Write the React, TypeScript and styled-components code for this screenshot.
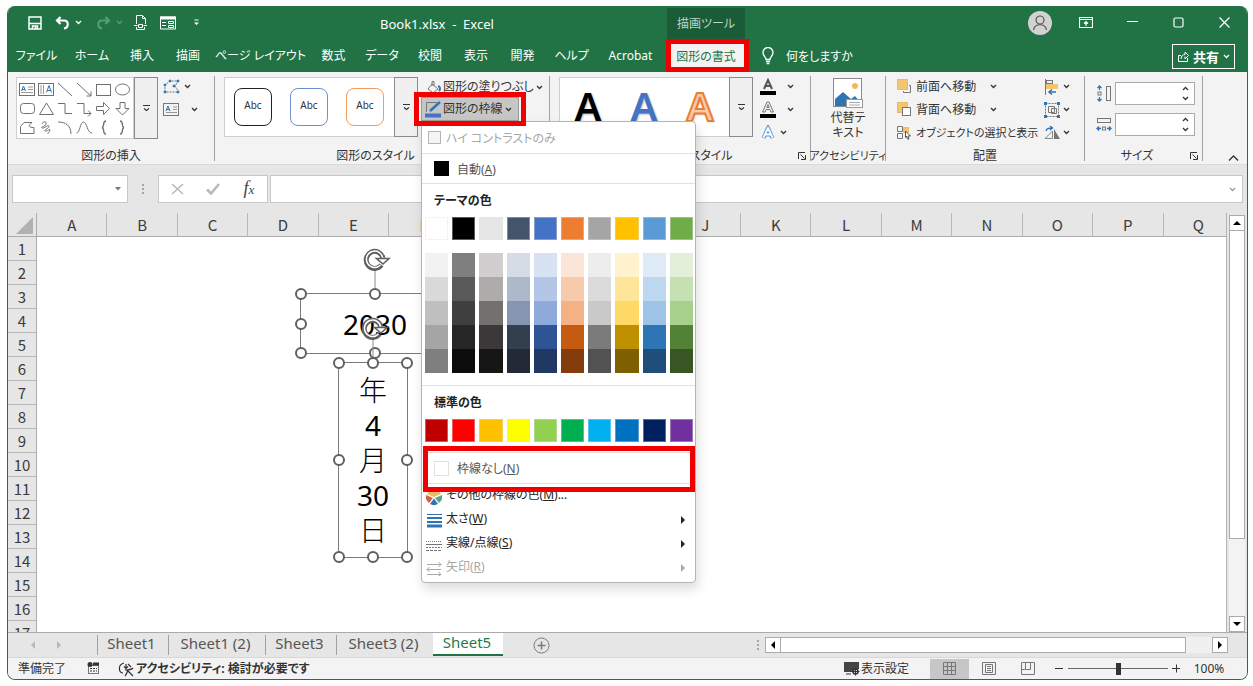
import React from "react";
import styled, { createGlobalStyle, css } from "styled-components";

const green = "#217346";
const red = "#f00000";
const ink = "#333333";
const blue = "#2f75b5";

const GlobalStyle = createGlobalStyle`
  *, *::before, *::after { box-sizing: border-box; }
  html, body { margin: 0; background: #fff; }
  body, button, input {
    font-family: "Noto Sans", "Noto Sans CJK JP", sans-serif;
    font-size: 12px;
    font-feature-settings: "palt";
    color: ${ink};
  }
  button { margin: 0; padding: 0; border: 0; background: none; white-space: nowrap; }
  input { margin: 0; }
  svg { display: block; flex: none; }
`;

/* ---------- window ---------- */

const Page = styled.div`
  height: 100vh;
  min-height: 480px;
  padding: 6px 5px 6px 7px;
`;

const Window = styled.div`
  height: 100%;
  display: flex;
  flex-direction: column;
  border: 1px solid ${green};
  border-top: 0;
  border-radius: 8px;
  overflow: hidden;
  background: #e6e6e6;
`;

const TitleBar = styled.header`
  display: flex;
  height: 33px;
  flex: none;
  background: ${green};
  color: #fff;
`;

const QuickAccess = styled.div`
  width: 372px;
  display: flex;
  align-items: center;
  gap: 9px;
  padding-left: 19px;
`;

const QuickButton = styled.button<{ $w: number; $dim?: boolean }>`
  width: ${(p) => p.$w}px;
  height: 24px;
  display: flex;
  align-items: center;
  justify-content: center;
  gap: 3px;
  color: ${(p) => (p.$dim ? "#5b9a78" : "#fff")};
`;

const Title = styled.h1`
  width: 287px;
  margin: 0;
  font-size: 13px;
  line-height: 37px;
  font-weight: 400;
  white-space: pre;
`;

const ContextLabel = styled.div`
  width: 78px;
  margin-top: 2px;
  background: #1b5c38;
  color: #b9d6c5;
  text-align: center;
  line-height: 31px;
`;

const Captions = styled.div`
  margin-left: auto;
  display: flex;
  align-items: center;
`;

const Caption = styled.button`
  width: 46px;
  height: 32px;
  display: flex;
  align-items: center;
  justify-content: center;
  color: #fff;
`;

const Avatar = styled.button`
  width: 24px;
  height: 24px;
  margin-right: 11px;
  border-radius: 50%;
  background: #d2d2d2;
  color: #555;
  display: flex;
  align-items: center;
  justify-content: center;
`;

const TabBar = styled.nav`
  display: flex;
  height: 33px;
  flex: none;
  background: ${green};
`;

const Tab = styled.button<{ $w: number }>`
  width: ${(p) => p.$w}px;
  color: #fff;
  line-height: 33px;
`;

const ActiveTab = styled.button`
  position: relative;
  width: 78px;
  margin-left: 3px;
  background: #f3f3f3;
  color: ${green};
`;

const Outline = styled.span<{ $inset: string }>`
  position: absolute;
  inset: ${(p) => p.$inset};
  border: 5px solid ${red};
  z-index: 20;
  pointer-events: none;
`;

const TellMe = styled.button`
  display: flex;
  align-items: center;
  gap: 12px;
  margin-left: 17px;
  color: #fff;
`;

const Share = styled.button`
  display: flex;
  align-items: center;
  gap: 4px;
  height: 25px;
  margin: 5px 12px 0 auto;
  padding: 0 4px;
  border: 1px solid #fff;
  color: #fff;
  font-size: 13px;
  font-weight: 700;
`;

/* ---------- ribbon ---------- */

const Ribbon = styled.section`
  display: flex;
  height: 93px;
  flex: none;
  background: #f3f3f3;
  border-bottom: 1px solid #dadada;
`;

const Group = styled.div<{ $w: number }>`
  width: ${(p) => p.$w}px;
  display: flex;
  flex-direction: column;
  padding-top: 3px;
`;

const Divider = styled.div`
  width: 1px;
  margin: 4px 0 3px;
  background: #a0a0a0;
`;

const GroupBody = styled.div<{ $pad: number }>`
  flex: 1;
  display: flex;
  align-items: flex-start;
  padding-left: ${(p) => p.$pad}px;
`;

const GroupFoot = styled.div`
  height: 16px;
  display: flex;
  align-items: center;
`;

const GroupName = styled.span<{ $compact?: boolean }>`
  flex: 1 0 0;
  min-width: 0;
  display: flex;
  justify-content: center;
  white-space: nowrap;
  font-size: ${(p) => (p.$compact ? 11 : 12)}px;
  line-height: 16px;
`;

const Launcher = styled.button`
  width: 12px;
  height: 12px;
  margin-right: 1px;
`;

const ShapeGallery = styled.div`
  width: 118px;
  height: 62px;
  margin-top: 2px;
  display: grid;
  grid-template-columns: repeat(6, 19px);
  grid-auto-rows: 19px;
  padding: 2px 1px;
  border: 1px solid #cfcfcf;
  background: #fff;
`;

const CardGallery = styled.div`
  width: 170px;
  height: 60px;
  margin-top: 2px;
  display: flex;
  align-items: center;
  padding-left: 9px;
  gap: 18px;
  border: 1px solid #cfcfcf;
  border-right: 0;
  background: #fff;
`;

const MoreButton = styled.button<{ $h: number }>`
  width: 24px;
  height: ${(p) => p.$h}px;
  margin-top: 2px;
  border: 1px solid #8a8a8a;
  background: #f0f0f0;
  display: flex;
  align-items: center;
  justify-content: center;
`;

const StyleCard = styled.button<{ $c: string }>`
  width: 38px;
  height: 38px;
  border: 1px solid ${(p) => p.$c};
  border-radius: 8px;
  background: #fff;
  font-size: 10px;
  line-height: 32px;
  padding-bottom: 4px;
`;

const Letter = styled.button<{ $c: string; $edge?: string }>`
  width: 38px;
  height: 58px;
  font-family: "Noto Sans", sans-serif;
  font-size: 40px;
  line-height: 56px;
  font-weight: 600;
  padding-bottom: 2px;
  color: ${(p) => p.$c};
  text-shadow: 1px 1px 2px #bbb;
  ${(p) => p.$edge && css`-webkit-text-stroke: 2px ${p.$edge};`}
`;

const Stack = styled.div<{ $ml: number; $mt?: number }>`
  display: flex;
  flex-direction: column;
  margin-left: ${(p) => p.$ml}px;
  margin-top: ${(p) => p.$mt ?? 0}px;
`;

const Command = styled.button<{ $gap?: number }>`
  height: 23px;
  display: flex;
  align-items: center;
  gap: ${(p) => p.$gap ?? 4}px;
`;

const CommandText = styled.span<{ $w?: number; $compact?: boolean }>`
  ${(p) => p.$w && css`width: ${p.$w}px;`}
  text-align: left;
  font-size: ${(p) => (p.$compact ? 11 : 12)}px;
  line-height: 16px;
`;

const FillButton = styled(Command)`
  height: 20px;
  padding-left: 5px;
  gap: 2px;
`;

const OutlineAnchor = styled.div`
  position: relative;
`;

const OutlineButton = styled(Command)`
  position: relative;
  height: 24px;
  width: 98px;
  padding-left: 3px;
  gap: 2px;
  background: #c6c6c6;
  border: 1px solid #9a9a9a;
`;

const AltText = styled.button`
  width: 100%;
  margin-top: 2px;
  display: flex;
  flex-direction: column;
  align-items: center;
  gap: 2px;
  line-height: 15px;
`;

const SizeRow = styled.label`
  display: flex;
  align-items: center;
  gap: 3px;
  margin: 5px 0 3px;
`;

const Spin = styled.span`
  width: 80px;
  height: 23px;
  display: flex;
  border: 1px solid #ababab;
  background: #fff;
`;

const SpinInput = styled.input`
  flex: 1;
  min-width: 0;
  border: 0;
  background: none;
`;

const SpinButtons = styled.span`
  width: 18px;
  display: flex;
  flex-direction: column;
  justify-content: space-around;
  align-items: center;
`;

const Collapse = styled.button`
  margin: auto 8px 2px auto;
`;

/* ---------- menu ---------- */

const Menu = styled.div`
  position: absolute;
  top: 24px;
  left: 0;
  z-index: 10;
  width: 275px;
  height: 462px;
  border: 1px solid #b5b5b5;
  border-radius: 4px;
  background: #fff;
  box-shadow: 2px 6px 12px rgba(0, 0, 0, 0.14);
`;

const MenuCheck = styled.label`
  height: 32px;
  display: flex;
  align-items: center;
  gap: 5px;
  padding-left: 6px;
  border-bottom: 1px solid #e1e1e1;
  color: #a8a8a8;
`;

const CheckBox = styled.input`
  appearance: none;
  width: 13px;
  height: 13px;
  border: 1px solid #b5b5b5;
  background: #f5f5f5;
`;

const MenuSwatchItem = styled.button`
  position: relative;
  width: 100%;
  height: 30px;
  display: flex;
  align-items: center;
  gap: 8px;
  padding-left: 12px;
  border-bottom: 1px solid #e1e1e1;
  color: #555;
`;

const NoLineItem = styled(MenuSwatchItem)`
  border-top: 1px solid #e1e1e1;
  height: 32px;
`;

const SmallSwatch = styled.span<{ $c: string; $edge: string }>`
  width: 15px;
  height: 15px;
  background: ${(p) => p.$c};
  border: 1px solid ${(p) => p.$edge};
`;

const MenuHeading = styled.h2`
  margin: 0;
  padding-left: 12px;
  font-size: 12px;
  line-height: 33px;
  font-weight: 700;
  color: #222;
`;

const Swatches = styled.div<{ $after: number }>`
  display: grid;
  grid-template-columns: repeat(10, 1fr);
  column-gap: 4px;
  padding: 0 2px 0 3px;
  margin-bottom: ${(p) => p.$after}px;
`;

const Swatch = styled.button<{ $c: string; $h: number }>`
  height: ${(p) => p.$h}px;
  background: ${(p) => p.$c};
  box-shadow: inset 0 0 0 1px rgba(225, 225, 225, 0.4);
`;

const Shade = styled.button<{ $c: string }>`
  height: 24px;
  background: ${(p) => p.$c};
`;

const Separator = styled.div`
  height: 1px;
  background: #e1e1e1;
`;

const NoLineFrame = styled(Outline)`
  z-index: 12;
`;

const MenuItem = styled.button<{ $dim?: boolean }>`
  width: 100%;
  height: 24px;
  display: flex;
  align-items: center;
  gap: 4px;
  padding: 0 8px 0 4px;
  color: ${(p) => (p.$dim ? "#a8a8a8" : "#222")};
`;

const MenuText = styled.span`
  flex: 1;
  padding-bottom: 5px;
  text-align: left;
`;

/* ---------- formula bar ---------- */

const FormulaBar = styled.section`
  display: flex;
  flex: none;
  height: 48px;
  padding: 10px 4px;
`;

const Field = styled.span<{ $w?: number }>`
  ${(p) => (p.$w ? css`width: ${p.$w}px;` : css`flex: 1;`)}
  height: 28px;
  display: flex;
  align-items: center;
  padding-right: 6px;
  border: 1px solid #c8c8c8;
  background: #fff;
  color: #999;
`;

const FieldInput = styled.input`
  flex: 1;
  min-width: 0;
  border: 0;
  background: none;
`;

const Grip = styled.span<{ $w: number }>`
  width: ${(p) => p.$w}px;
  display: flex;
  justify-content: center;
  align-items: center;
  color: #a5a5a5;
`;

const FormulaButtons = styled.div`
  width: 110px;
  height: 28px;
  margin-right: 2px;
  display: flex;
  border: 1px solid #c8c8c8;
  background: #fff;
`;

const FormulaButton = styled.button`
  flex: 1;
  display: flex;
  align-items: center;
  justify-content: center;
  color: #b8b8b8;
`;

const Fx = styled.i`
  font-family: "Liberation Serif", serif;
  font-size: 18px;
  line-height: 18px;
  color: #444;
`;

const FxSub = styled.span`
  font-size: 13px;
`;

/* ---------- sheet ---------- */

const SheetArea = styled.main`
  flex: 1;
  min-height: 0;
  display: flex;
`;

const Viewport = styled.div`
  position: relative;
  flex: 1;
  min-width: 0;
  overflow: hidden;
  background: #fff;
  border-right: 1px solid #b5b5b5;
`;

const Grid = styled.table`
  width: calc(100% + 8px);
  table-layout: fixed;
  border-spacing: 0;
  font-family: "Noto Sans CJK JP", sans-serif;
  font-size: 15px;
  line-height: 22px;
  th { padding: 0; font-weight: 400; background: #e6e6e6; color: #3b3b3b; }
  td { padding: 0; }
`;

const Corner = styled.th`
  width: 29px;
  height: 24px;
  border-right: 1px solid #ababab;
  border-bottom: 1px solid #ababab;
`;

const ColumnHead = styled.th`
  height: 24px;
  border-right: 1px solid #b8b8b8;
  border-bottom: 1px solid #ababab;
`;

const RowHead = styled.th`
  height: 24px;
  border-right: 1px solid #ababab;
  border-bottom: 1px solid #b8b8b8;
`;

const Shape = styled.div<{ $x: number; $y: number; $w: number; $h: number }>`
  position: absolute;
  left: ${(p) => p.$x}px;
  top: ${(p) => p.$y}px;
  width: ${(p) => p.$w}px;
  height: ${(p) => p.$h}px;
  border: 1px solid #7a7a7a;
  font-size: 28px;
  line-height: 60px;
  text-align: center;
  color: #000;
`;

const VerticalText = styled.div`
  padding-top: 10px;
  display: flex;
  flex-direction: column;
  align-items: center;
  line-height: 35px;
`;

const Kanji = styled.span`
  font-weight: 300;
`;

const Handle = styled.span<{ $l: number; $t: number }>`
  position: absolute;
  left: calc(${(p) => p.$l}% - 6px);
  top: calc(${(p) => p.$t}% - 6px);
  width: 12px;
  height: 12px;
  border: 2px solid #5f5f5f;
  border-radius: 50%;
  background: #fff;
`;

const Rotator = styled.span`
  position: absolute;
  left: calc(50% - 12px);
  top: -46px;
`;

const VScroll = styled.div`
  width: 20px;
  display: flex;
  flex-direction: column;
  align-items: center;
  padding-top: 2px;
  padding-right: 1px;
`;

const ScrollButton = styled.button`
  width: 16px;
  height: 16px;
  flex: none;
  border: 1px solid #ababab;
  background: #fff;
  color: #000;
  display: flex;
  align-items: center;
  justify-content: center;
`;

const VTrack = styled.div`
  flex: 1;
  width: 16px;
  background: #f3f3f3;
`;

const VThumb = styled.div`
  height: 80%;
  border: 1px solid #ababab;
  border-top: 0;
  background: #fff;
`;

/* ---------- sheet tabs and status ---------- */

const SheetBar = styled.nav`
  flex: none;
  height: 26px;
  display: flex;
  border-top: 1px solid #ababab;
  border-bottom: 1px solid #d8d8d8;
`;

const SheetArrows = styled.div`
  width: 89px;
  display: flex;
  align-items: center;
  gap: 18px;
  padding-left: 21px;
  color: #b8b8b8;
`;

const SheetTab = styled.button<{ $w: number }>`
  width: ${(p) => p.$w}px;
  height: 20px;
  margin-top: 2px;
  padding: 0 3px 3px 0;
  border-left: 1px solid #a0a0a0;
  font-size: 15px;
  line-height: 17px;
  color: #555;
`;

const CurrentSheet = styled.button`
  width: 70px;
  height: 23px;
  border-bottom: 2px solid ${green};
  padding: 0 2px 2px 0;
  background: #fff;
  font-size: 15px;
  line-height: 19px;
  color: #1f7d49;
`;

const AddSheet = styled.button`
  margin-left: 30px;
  color: #7a7a7a;
`;

const HScroll = styled.div`
  width: 40%;
  margin-left: auto;
  padding-right: 19px;
  display: flex;
  align-items: center;
`;

const HTrack = styled.div`
  flex: 1;
  height: 16px;
  background: #f0f0f0;
`;

const HThumb = styled.div`
  width: 94%;
  height: 16px;
  border: 1px solid #ababab;
  border-left: 0;
  background: #fff;
`;

const StatusBar = styled.footer`
  flex: none;
  height: 21px;
  display: flex;
  align-items: center;
  padding: 0 20px 0 10px;
  background: #f3f3f3;
  line-height: 20px;
`;

const StatusButton = styled.button<{ $ml: number; $bold?: boolean }>`
  display: flex;
  align-items: center;
  gap: 1px;
  margin-left: ${(p) => p.$ml}px;
  line-height: 20px;
  font-weight: ${(p) => (p.$bold ? 700 : 400)};
`;

const Spacer = styled.span`
  flex: 1;
`;

const Views = styled.div`
  display: flex;
  margin: 0 8px 0 21px;
`;

const ViewButton = styled.button<{ $on?: boolean }>`
  width: 39px;
  height: 20px;
  display: flex;
  align-items: center;
  justify-content: center;
  background: ${(p) => (p.$on ? "#c6c6c6" : "transparent")};
`;

const Zoom = styled.input`
  appearance: none;
  width: 100px;
  height: 16px;
  margin: 0 4px;
  background: linear-gradient(#666, #666) center / 100% 1px no-repeat;
  &::-webkit-slider-thumb {
    appearance: none;
    width: 5px;
    height: 12px;
    background: #333;
  }
`;

const ZoomStep = styled.button`
  width: 9px;
`;

const ZoomValue = styled.button`
  width: 36px;
  margin-left: 10px;
`;

/* ---------- icons ---------- */

type IconProps = { w: number; h: number; children: React.ReactNode; sw?: number };
const Icon = ({ w, h, children, sw = 1 }: IconProps) => (
  <svg width={w} height={h} viewBox={`0 0 ${w} ${h}`} fill="none" stroke="currentColor" strokeWidth={sw} aria-hidden="true">
    {children}
  </svg>
);

const Chevron = () => (
  <Icon w={7} h={5} sw={1.3}><path d="M1 1l2.500 2.500L6 1" /></Icon>
);
const ChevronUp = () => (
  <Icon w={7} h={5} sw={1.3}><path d="M1 4l2.500-2.500L6 4" /></Icon>
);
const MoreIcon = () => (
  <Icon w={9} h={8} sw={1.1}><path d="M1 1.500h7M2 4.500l2.500 2L7 4.500" /></Icon>
);
const LaunchIcon = () => (
  <Icon w={10} h={10}><path d="M1.500 8V1.500H8M3.500 3.500l4 4M8.500 4v4.500H4" /></Icon>
);
const Arrow = ({ d }: { d: "left" | "right" | "up" | "down" }) => {
  const path = { left: "M6 0v8L2 4z", right: "M2 0v8l4-4z", up: "M0 6h8L4 2z", down: "M0 2h8L4 6z" }[d];
  return <Icon w={8} h={8} sw={0}><path d={path} fill="currentColor" /></Icon>;
};

const shapeIcons: React.ReactNode[] = [
  <><rect x="1.500" y="3.500" width="15" height="12" /><path d="M10 7h5M10 9.500h5M3 12.500h12" stroke="#999" /><path d="M3.500 11l2-5 2 5M4.200 9.500h2.600" stroke={blue} /></>,
  <><rect x="1.500" y="3.500" width="15" height="12" /><path d="M4 5v9M6.500 5v9" stroke="#999" /><path d="M9.500 12.500l2.500-7 2.500 7M10.300 10.500h3.500" stroke={blue} /></>,
  <path d="M2 3l14 13" />,
  <path d="M2 3l14 13M16 11.500V16h-4.500" />,
  <rect x="2.500" y="4.500" width="14" height="11" />,
  <ellipse cx="9.500" cy="9.500" rx="7" ry="5.500" />,
  <rect x="2.500" y="4.500" width="14" height="10" rx="3" />,
  <path d="M9.500 4l7 11.500h-14z" />,
  <path d="M2 4.500h7v10h7" />,
  <path d="M2 4.500h7v10h7M13 11.500l3 3-3 3" />,
  <path d="M2.500 7.500h7v-4l6 6-6 6v-4h-7z" />,
  <path d="M7 3.500h5v6h4l-6.500 6.500-6.500-6.500h4z" />,
  <path d="M6 4.500h8c-4 3-4 5 2 5v6H2.500v-7z" />,
  <path d="M5 6c1-3 5-3 4 0s-6 3-4 4 6-4 7-2-6 4-4 5 5-3 5-1-3 3-2 4" />,
  <path d="M2 4c8 0 13 4 13 12" />,
  <path d="M1.500 15C5 15 5 4 8.500 4S12 15 17 15" />,
  <path d="M12 3c-4 0-1 6-4 6.500C11 10 8 16 12 16" strokeWidth="1.300" />,
  <path d="M7 3c4 0 1 6 4 6.500C8 10 11 16 7 16" strokeWidth="1.300" />,
];

const FontColor = ({ hollow }: { hollow?: boolean }) => (
  <Icon w={16} h={17}>
    {hollow ? (
      <path d="M2.500 11L7 1h2l4.500 10h-2.500l-1-2.500H6L5 11zM6.800 6.500h2.400L8 3.500z" stroke="#777" />
    ) : (
      <path d="M4 11L8 2l4 9M5.500 8h5" stroke="#555" strokeWidth="2" />
    )}
    <path d="M0 15h16" stroke="#000" strokeWidth="4" />
  </Icon>
);

const LayerIcon = ({ back }: { back?: boolean }) => (
  <Icon w={15} h={15}>
    {back ? (
      <><rect x="0.500" y="0.500" width="10" height="10" fill="#f2c572" stroke="#e8bb66" /><rect x="5.500" y="5.500" width="8" height="8" fill="#fff" stroke="#777" /></>
    ) : (
      <><path d="M12 6.500h1.500v7h-7V12" stroke="#777" /><rect x="0.500" y="0.500" width="10" height="10" fill="#f2c572" stroke="#e8bb66" /></>
    )}
  </Icon>
);

const RotateHandle = () => (
  <svg width="28" height="40" viewBox="0 0 28 40" fill="none" aria-hidden="true">
    <path d="M12 22v18" stroke="#8a8a8a" />
    <path d="M18.500 17A8.500 8.500 0 1 1 20 10" stroke="#5f5f5f" strokeWidth="5" />
    <path d="M17.500 17A8.200 8.200 0 1 1 19.800 10.500" stroke="#fff" strokeWidth="1.500" />
    <path d="M13.500 10.500H26l-6 5.500z" fill="#fff" stroke="#5f5f5f" strokeWidth="1.600" />
  </svg>
);

/* ---------- data ---------- */

const tabs: [string, number][] = [
  ["ファイル", 57], ["ホーム", 54], ["挿入", 46], ["描画", 46], ["ページ レイアウト", 99], ["数式", 47],
  ["データ", 50], ["校閲", 46], ["表示", 46], ["開発", 47], ["ヘルプ", 51], ["Acrobat", 67],
];

const themeColors = ["#ffffff", "#000000", "#e7e6e6", "#44546a", "#4472c4", "#ed7d31", "#a5a5a5", "#ffc000", "#5b9bd5", "#70ad47"];
const shades = [
  ["#f2f2f2", "#7f7f7f", "#d0cece", "#d6dce5", "#d9e2f3", "#fbe5d6", "#ededed", "#fff2cc", "#deebf7", "#e2f0d9"],
  ["#d9d9d9", "#595959", "#aeabab", "#adb9ca", "#b4c6e7", "#f7caac", "#dbdbdb", "#fee599", "#bdd7ee", "#c5e0b3"],
  ["#bfbfbf", "#3f3f3f", "#757070", "#8496b0", "#8eaadb", "#f4b183", "#c9c9c9", "#ffd965", "#9dc3e6", "#a8d08d"],
  ["#a5a5a5", "#262626", "#3a3838", "#323f4f", "#2f5496", "#c55a11", "#7b7b7b", "#bf9000", "#2e75b5", "#538135"],
  ["#7f7f7f", "#0c0c0c", "#171616", "#222a35", "#1f3864", "#833c0b", "#525252", "#7f6000", "#1e4e79", "#375623"],
];
const standardColors = ["#c00000", "#ff0000", "#ffc000", "#ffff00", "#92d050", "#00b050", "#00b0f0", "#0070c0", "#002060", "#7030a0"];
const columns = "ABCDEFGHIJKLMNOPQ".split("");
const rows = Array.from({ length: 17 }, (_, i) => i + 1);

/* ---------- parts ---------- */

const OutlineMenu = () => (
  <Menu role="menu">
    <MenuCheck><CheckBox type="checkbox" disabled />ハイ コントラストのみ</MenuCheck>
    <MenuSwatchItem><SmallSwatch $c="#000" $edge="#000" /><span>自動(<u>A</u>)</span></MenuSwatchItem>
    <MenuHeading>テーマの色</MenuHeading>
    <Swatches $after={13}>
      {themeColors.map((c) => <Swatch key={c} $c={c} $h={23} aria-label={c} />)}
    </Swatches>
    <Swatches $after={12}>
      {shades.flat().map((c, i) => <Shade key={i} $c={c} aria-label={c} />)}
    </Swatches>
    <Separator />
    <MenuHeading>標準の色</MenuHeading>
    <Swatches $after={10}>
      {standardColors.map((c) => <Swatch key={c} $c={c} $h={23} aria-label={c} />)}
    </Swatches>
    <NoLineItem>
      <SmallSwatch $c="#fff" $edge="#e1e1e1" /><span>枠線なし(<u>N</u>)</span>
      <NoLineFrame $inset="-7px 0 -9px 1px" />
    </NoLineItem>
    <MenuItem>
      <Icon w={16} h={24} sw={0}>
        <path d="M7 14L0 11a8 8 0 0 0 3 8z" fill="#d9603b" />
        <path d="M8 14.500L4 20a8 8 0 0 0 8 0z" fill={blue} />
        <path d="M9 14l7-3a8 8 0 0 1-3 8z" fill="#5aa583" />
        <path d="M8 13L1 10a8 8 0 0 1 14 0z" fill="#e8bb66" />
      </Icon>
      <MenuText>その他の枠線の色(<u>M</u>)...</MenuText>
    </MenuItem>
    <MenuItem>
      <Icon w={16} h={16}><path d="M1 2.500h15" stroke={blue} /><path d="M1 6h15" stroke={blue} strokeWidth="2" /><path d="M1 10h15" stroke={blue} strokeWidth="2" /><path d="M1 14h15" stroke={blue} strokeWidth="3" /></Icon>
      <MenuText>太さ(<u>W</u>)</MenuText><Arrow d="right" />
    </MenuItem>
    <MenuItem>
      <Icon w={16} h={16}><g stroke="#777"><path d="M0 5.500h16" strokeDasharray="1 1" /><path d="M0 8.500h16" /><path d="M0 11.500h16" strokeDasharray="2 1" /><path d="M0 14.500h16" strokeDasharray="3 1" /></g></Icon>
      <MenuText>実線/点線(<u>S</u>)</MenuText><Arrow d="right" />
    </MenuItem>
    <MenuItem $dim disabled>
      <Icon w={16} h={16}><path d="M1 4.500h14M12.500 2l2.500 2.500L12.500 7M1 9.500h14M3.500 7L1 9.500 3.500 12M1 14.500h14M12.500 12l2.500 2.500-2.500 1.500" /></Icon>
      <MenuText>矢印(<u>R</u>)</MenuText><Arrow d="right" />
    </MenuItem>
  </Menu>
);

const eight: [number, number][] = [[0, 0], [50, 0], [100, 0], [0, 50], [100, 50], [0, 100], [50, 100], [100, 100]];
const Handles = () => (
  <>
    {eight.map(([l, t]) => <Handle key={`${l}-${t}`} $l={l} $t={t} />)}
  </>
);

const RibbonGroups = () => (
  <Ribbon>
    <Group $w={206}>
      <GroupBody $pad={8}>
        <ShapeGallery>
          {shapeIcons.map((s, i) => (
            <button key={i} aria-label="図形"><Icon w={19} h={19}><g stroke="#707070">{s}</g></Icon></button>
          ))}
        </ShapeGallery>
        <MoreButton $h={62} aria-label="その他"><MoreIcon /></MoreButton>
        <Stack $ml={5}>
          <Command $gap={4} aria-label="図形の編集">
            <Icon w={17} h={15}><path d="M2 13V6l5-4h8l-3 5 4 6z" stroke="#777" strokeDasharray="2 1" /><path d="M1 12h2v2H1zM6 1h2v2H6zM14 1h2v2h-2zM14 12h2v2h-2zM10 6h2v2h-2zM1 5h2v2H1z" fill={blue} stroke={blue} strokeWidth="0.500" /></Icon>
            <Chevron />
          </Command>
          <Command $gap={11} aria-label="テキスト ボックス">
            <Icon w={17} h={14}><rect x="0.500" y="0.500" width="15" height="12" stroke="#777" /><path d="M10 4h4M10 6.500h4M3 9.500h11" stroke="#999" /><path d="M3 8l2-5 2 5M3.800 6.500h2.500" stroke={blue} /></Icon>
            <Chevron />
          </Command>
        </Stack>
      </GroupBody>
      <GroupFoot><GroupName>図形の挿入</GroupName></GroupFoot>
    </Group>
    <Divider />
    <Group $w={334}>
      <GroupBody $pad={9}>
        <CardGallery>
          <StyleCard $c="#222">Abc</StyleCard>
          <StyleCard $c="#6f8fd2">Abc</StyleCard>
          <StyleCard $c="#f09a5e">Abc</StyleCard>
        </CardGallery>
        <MoreButton $h={60} aria-label="その他"><MoreIcon /></MoreButton>
        <Stack $ml={3} $mt={2}>
          <FillButton>
            <Icon w={15} h={15}><path d="M6 4l6 5-5 4-5-4zM6 6V1.500h2V6" stroke="#777" /><path d="M12 6c3 1 2 4 1 5" stroke={blue} strokeWidth="2" /></Icon>
            <CommandText>図形の塗りつぶし</CommandText><Chevron />
          </FillButton>
          <OutlineAnchor>
            <OutlineButton aria-haspopup="menu">
              <Icon w={16} h={17}><path d="M12 1.500H1.500V11" stroke="#777" /><path d="M5 10L15 1" stroke={blue} strokeWidth="2.500" /><path d="M0 14.500h16" stroke="#4472c4" strokeWidth="4" /></Icon>
              <CommandText>図形の枠線</CommandText><Chevron />
              <Outline $inset="-6px -8px" />
            </OutlineButton>
            <OutlineMenu />
          </OutlineAnchor>
        </Stack>
      </GroupBody>
      <GroupFoot><GroupName>図形のスタイル</GroupName><Launcher aria-label="図形のスタイルの設定"><LaunchIcon /></Launcher></GroupFoot>
    </Group>
    <Divider />
    <Group $w={260}>
      <GroupBody $pad={9}>
        <CardGallery>
          <Letter $c="#000">A</Letter>
          <Letter $c="#4472c4">A</Letter>
          <Letter $c="#f8cbad" $edge="#ed7d31">A</Letter>
        </CardGallery>
        <MoreButton $h={60} aria-label="その他"><MoreIcon /></MoreButton>
        <Stack $ml={7}>
          <Command $gap={11} aria-label="文字の塗りつぶし"><FontColor /><Chevron /></Command>
          <Command $gap={11} aria-label="文字の輪郭"><FontColor hollow /><Chevron /></Command>
          <Command $gap={4} aria-label="文字の効果">
            <Icon w={16} h={16}><path d="M3.500 13L8 3l4.500 10M5 9.500h6" stroke="#5b9bd5" strokeWidth="4" /><path d="M3.500 12.500L8 3l4.500 9.500M5 9.500h6" stroke="#fff" strokeWidth="1.800" /></Icon>
            <Chevron />
          </Command>
        </Stack>
      </GroupBody>
      <GroupFoot><GroupName>ワードアートのスタイル</GroupName><Launcher aria-label="ワードアートの設定"><LaunchIcon /></Launcher></GroupFoot>
    </Group>
    <Divider />
    <Group $w={74}>
      <GroupBody $pad={0}>
        <AltText>
          <Icon w={30} h={31}>
            <rect x="0.500" y="1.500" width="28" height="28" fill="#fff" stroke="#8a8a8a" />
            <circle cx="22" cy="9" r="3" fill="#f0b95b" stroke="none" />
            <path d="M2 29v-7l8-7 8 7 4-3 5 6v4z" fill={blue} stroke="none" />
            <rect x="13.500" y="22.500" width="16" height="8" fill="#fff" stroke="#999" /><path d="M16 25.500h11M16 28h11" stroke="#aaa" />
          </Icon>
          <span>代替テ<br />キスト</span>
        </AltText>
      </GroupBody>
      <GroupFoot><GroupName $compact>アクセシビリティ</GroupName></GroupFoot>
    </Group>
    <Divider />
    <Group $w={198}>
      <GroupBody $pad={11}>
        <Stack $ml={0}>
          <Command><LayerIcon /><CommandText $w={70}>前面へ移動</CommandText><Chevron /></Command>
          <Command><LayerIcon back /><CommandText $w={70}>背面へ移動</CommandText><Chevron /></Command>
          <Command>
            <Icon w={15} h={15}><path d="M0.500 1.500h5v5h-5zM0.500 8.500h5v5h-5z" stroke="#777" /><path d="M6.500 2.500h5v5h-5z" fill="#f2c572" stroke="#e8bb66" /><path d="M8.500 6l5 5H11l1 3h-1.500l-1-3-1 1.500z" fill="#fff" stroke="#555" /></Icon>
            <CommandText $w={118} $compact>オブジェクトの選択と表示</CommandText>
          </Command>
        </Stack>
        <Stack $ml={10}>
          <Command $gap={3} aria-label="配置">
            <Icon w={16} h={16}><path d="M1.500 0v16" stroke="#777" /><rect x="2.500" y="1.500" width="6" height="3" stroke="#777" /><rect x="2" y="5" width="12" height="5" fill="#f2c572" stroke="none" /><path d="M5 13h7M8 10.500L5 13l3 2.500" stroke={blue} strokeWidth="1.500" /></Icon><Chevron />
          </Command>
          <Command $gap={3} aria-label="グループ化">
            <Icon w={16} h={16}><rect x="1.500" y="1.500" width="13" height="13" stroke="#777" strokeDasharray="2 1" /><path d="M4.500 4.500h6v6h-6zM7.500 6.500h5v5h-5z" stroke="#777" /><path d="M0 0h3v3H0zM13 0h3v3h-3zM0 13h3v3H0zM13 13h3v3h-3z" fill={blue} stroke="none" /></Icon><Chevron />
          </Command>
          <Command $gap={3} aria-label="回転">
            <Icon w={16} h={14}><path d="M8.500 12.500H1L8.500 5z" stroke="#888" /><path d="M10 3v10h6z" fill="#777" stroke="none" /><path d="M2 5c1-3 3-3 6-3M6 0l2.500 2L6 4" stroke={blue} strokeWidth="1.300" /></Icon><Chevron />
          </Command>
        </Stack>
      </GroupBody>
      <GroupFoot><GroupName>配置</GroupName></GroupFoot>
    </Group>
    <Divider />
    <Group $w={117}>
      <GroupBody $pad={11}>
        <Stack $ml={0} $mt={2}>
          <SizeRow>
            <Icon w={16} h={17}><rect x="10.500" y="1.500" width="4" height="14" stroke="#777" /><rect x="2" y="7" width="3" height="3" stroke="#777" /><path d="M3.500 5V1M1.500 3l2-2 2 2M3.500 12v4M1.500 14l2 2 2-2" stroke={blue} strokeWidth="1.300" /></Icon>
            <Spin><SpinInput aria-label="図形の高さ" /><SpinButtons><ChevronUp /><Chevron /></SpinButtons></Spin>
          </SizeRow>
          <SizeRow>
            <Icon w={16} h={17}><rect x="1.500" y="2.500" width="13" height="4" stroke="#777" /><rect x="6.500" y="11" width="3" height="3" stroke="#777" /><path d="M5 12.500H1M3 10.500l-2 2 2 2M11 12.500h4M13 10.500l2 2-2 2" stroke={blue} strokeWidth="1.300" /></Icon>
            <Spin><SpinInput aria-label="図形の幅" /><SpinButtons><ChevronUp /><Chevron /></SpinButtons></Spin>
          </SizeRow>
        </Stack>
      </GroupBody>
      <GroupFoot><GroupName>サイズ</GroupName><Launcher aria-label="サイズの設定"><LaunchIcon /></Launcher></GroupFoot>
    </Group>
    <Divider />
    <Collapse aria-label="リボンを折りたたむ"><Icon w={11} h={8} sw={1.3}><path d="M1 6.500l4.500-4.500L10 6.500" /></Icon></Collapse>
  </Ribbon>
);

export default function App() {
  return (
    <Page>
      <GlobalStyle />
      <Window>
        <TitleBar>
          <QuickAccess>
            <QuickButton $w={16} aria-label="上書き保存">
              <Icon w={14} h={14} sw={1.5}><path d="M1 1h12v12H1zM1 7.500h12M4.500 13v-3h5v3M7.500 10v3" /></Icon>
            </QuickButton>
            <QuickButton $w={34} aria-label="元に戻す">
              <Icon w={15} h={14} sw={2.200}><path d="M5.500 1L2 4.500 5.500 8M2 4.500h7c5 0 5 7 0 8" /></Icon>
              <Icon w={11} h={5} sw={1.3}><path d="M3 1l2.500 2.500L8 1" /></Icon>
            </QuickButton>
            <QuickButton $w={30} $dim aria-label="やり直し">
              <Icon w={15} h={14} sw={2.200}><path d="M9.500 1L13 4.500 9.500 8M13 4.500H6c-5 0-5 7 0 8" /></Icon>
              <Icon w={11} h={5} sw={1.3}><path d="M3 1l2.500 2.500L8 1" /></Icon>
            </QuickButton>
            <QuickButton $w={13} aria-label="印刷プレビュー">
              <Icon w={13} h={15}><path d="M2.500 9V0.500h6l3 3V9M8.500 0.500v3h3M0 10.500h3.500M9.500 10.500H13M4.500 9.500h4v3h-4zM2.500 12v2.500h8V12" /></Icon>
            </QuickButton>
            <QuickButton $w={24} aria-label="フォーム">
              <Icon w={16} h={14}><path d="M0.500 1h15v12H0.500z" /><path d="M0 2h16" strokeWidth="3" /><path d="M2 6.500h4M2 9.500h4M8.500 5.500h5v2h-5zM8.500 9.500h5v2h-5z" /></Icon>
            </QuickButton>
            <QuickButton $w={14} aria-label="カスタマイズ">
              <Icon w={7} h={7}><path d="M1.500 1h4" /><path d="M1 3.500h5L3.500 6z" fill="#fff" stroke="none" /></Icon>
            </QuickButton>
          </QuickAccess>
          <Title>Book1.xlsx  -  Excel</Title>
          <ContextLabel>描画ツール</ContextLabel>
          <Captions>
            <Avatar aria-label="アカウント"><Icon w={16} h={18} sw={1.200}><circle cx="8" cy="6" r="4" /><path d="M1.500 16c1-7 12-7 13 0" /></Icon></Avatar>
            <Caption aria-label="リボンの表示オプション"><Icon w={14} h={11}><path d="M0.500 0.500h13v10H0.500zM0.500 2.500h13M7 9V5M5 6.500L7 4.500l2 2" strokeWidth="1.200" /></Icon></Caption>
            <Caption aria-label="最小化"><Icon w={11} h={11}><path d="M0 4.500h11" /></Icon></Caption>
            <Caption aria-label="最大化"><Icon w={11} h={11} sw={1.200}><rect x="1" y="1" width="9" height="9" rx="1.500" /></Icon></Caption>
            <Caption aria-label="閉じる"><Icon w={11} h={11} sw={1.200}><path d="M0.500 0.500l10 10M10.500 0.500l-10 10" /></Icon></Caption>
          </Captions>
        </TitleBar>
        <TabBar>
          {tabs.map(([name, w]) => <Tab key={name} $w={w}>{name}</Tab>)}
          <ActiveTab>図形の書式<Outline $inset="0 -4px 0 -1px" /></ActiveTab>
          <TellMe>
            <Icon w={12} h={18} sw={1.300}><path d="M4 12.500C4 10 1 9 1 5.500a5 5 0 0 1 10 0C11 9 8 10 8 12.500zM4 14.500h4M4.500 16.500h3" /></Icon>
            何をしますか
          </TellMe>
          <Share>
            <Icon w={12} h={13}><path d="M4 5.500H1.500v6h9V8M4 9c0-3 2-4.500 4-4.500V2l3.500 3.500L8 9V6.500" /></Icon>共有<Chevron />
          </Share>
        </TabBar>
        <RibbonGroups />
        <FormulaBar>
          <Field $w={116}><FieldInput aria-label="名前ボックス" /><Icon w={6} h={4} sw={0}><path d="M0 0h6L3 3.500z" fill="#777" /></Icon></Field>
          <Grip $w={30}><Icon w={2} h={11} sw={2}><path d="M1 0v11" strokeDasharray="2 2" /></Icon></Grip>
          <FormulaButtons>
            <FormulaButton aria-label="キャンセル"><Icon w={13} h={12} sw={1.500}><path d="M1 1l11 10M12 1L1 11" /></Icon></FormulaButton>
            <FormulaButton aria-label="入力"><Icon w={14} h={12} sw={2.500}><path d="M1 6.500l4 4L13 1" /></Icon></FormulaButton>
            <FormulaButton aria-label="関数の挿入"><Fx>f<FxSub>x</FxSub></Fx></FormulaButton>
          </FormulaButtons>
          <Field><FieldInput aria-label="数式バー" /><Chevron /></Field>
        </FormulaBar>
        <SheetArea>
          <Viewport>
            <Grid>
              <thead>
                <tr>
                  <Corner><Icon w={27} h={20} sw={0}><path d="M25 2v17H8z" fill="#b1b1b1" /></Icon></Corner>
                  {columns.map((c) => <ColumnHead key={c} scope="col">{c}</ColumnHead>)}
                </tr>
              </thead>
              <tbody>
                {rows.map((r) => <tr key={r}><RowHead scope="row">{r}</RowHead><td colSpan={17} /></tr>)}
              </tbody>
            </Grid>
            <Shape $x={292} $y={80} $w={150} $h={61}>
              2030
              <Rotator><RotateHandle /></Rotator>
              <Handles />
            </Shape>
            <Shape $x={330} $y={149} $w={70} $h={196}>
              <VerticalText><Kanji>年</Kanji><span>4</span><Kanji>月</Kanji><span>30</span><Kanji>日</Kanji></VerticalText>
              <Rotator><RotateHandle /></Rotator>
              <Handles />
            </Shape>
          </Viewport>
          <VScroll>
            <ScrollButton aria-label="上へ"><Arrow d="up" /></ScrollButton>
            <VTrack><VThumb /></VTrack>
            <ScrollButton aria-label="下へ"><Arrow d="down" /></ScrollButton>
          </VScroll>
        </SheetArea>
        <SheetBar>
          <SheetArrows><Arrow d="left" /><Arrow d="right" /></SheetArrows>
          <SheetTab $w={71}>Sheet1</SheetTab>
          <SheetTab $w={97}>Sheet1 (2)</SheetTab>
          <SheetTab $w={71}>Sheet3</SheetTab>
          <SheetTab $w={97}>Sheet3 (2)</SheetTab>
          <CurrentSheet>Sheet5</CurrentSheet>
          <AddSheet aria-label="新しいシート"><Icon w={17} h={17}><circle cx="8.500" cy="8.500" r="7.500" /><path d="M4.500 8.500h8M8.500 4.500v8" strokeWidth="1.500" /></Icon></AddSheet>
          <HScroll>
            <Grip $w={14}><Icon w={2} h={11} sw={2}><path d="M1 0v11" strokeDasharray="2 2" /></Icon></Grip>
            <ScrollButton aria-label="左へ"><Arrow d="left" /></ScrollButton>
            <HTrack><HThumb /></HTrack>
            <ScrollButton aria-label="右へ"><Arrow d="right" /></ScrollButton>
          </HScroll>
        </SheetBar>
        <StatusBar>
          準備完了
          <StatusButton $ml={21} aria-label="マクロの記録"><Icon w={13} h={13}><rect x="1.500" y="3.500" width="10" height="8" stroke="#777" /><path d="M3 6.500h7M3 9h7" strokeDasharray="2 1" /><path d="M6 2h6" strokeWidth="3" /><circle cx="3" cy="2.500" r="2.500" fill={ink} stroke="none" /></Icon></StatusButton>
          <StatusButton $ml={18} $bold>
            <Icon w={17} h={16} sw={1.200}><path d="M6 2C-1 4 1 12 5 12M8 3v4M6 5.500L8 7.500l2-2M10 3l3 3M10 9c-1 3-2 5-3 6M7 9c4 0 7-1 8-2M9 9l6 6" /></Icon>
            アクセシビリティ: 検討が必要です
          </StatusButton>
          <Spacer />
          <StatusButton $ml={0}>
            <Icon w={16} h={15}><path d="M0 1h15v7h-4l-3 3H0z" fill="#444" stroke="none" /><circle cx="11.500" cy="10.500" r="2.500" strokeWidth="1.500" /><path d="M11.500 6.500v8M7.500 10.500h8M2 13h5" /></Icon>
            表示設定
          </StatusButton>
          <Views>
            <ViewButton $on aria-label="標準表示"><Icon w={13} h={13}><path d="M0.500 0.500h12v12H0.500zM4.500 0v13M8.500 0v13M0 4.500h13M0 8.500h13" stroke="#777" /></Icon></ViewButton>
            <ViewButton aria-label="ページ レイアウト表示"><Icon w={14} h={13}><path d="M0.500 0.500h13v12H0.500zM3.500 2.500h7v8h-7zM5 4.500h4M5 6.500h4M5 8.500h4" stroke="#777" /></Icon></ViewButton>
            <ViewButton aria-label="改ページ プレビュー"><Icon w={14} h={13}><path d="M0.500 0.500h13v12H0.500zM4.500 0v7.500h5V0M0 7.500h4" stroke="#777" /></Icon></ViewButton>
          </Views>
          <ZoomStep aria-label="縮小"><Icon w={9} h={9}><path d="M0 4.500h8" /></Icon></ZoomStep>
          <Zoom type="range" aria-label="ズーム" defaultValue={50} />
          <ZoomStep aria-label="拡大"><Icon w={9} h={9}><path d="M0 4.500h8M4.500 0.500v8" /></Icon></ZoomStep>
          <ZoomValue>100%</ZoomValue>
        </StatusBar>
      </Window>
    </Page>
  );
}
